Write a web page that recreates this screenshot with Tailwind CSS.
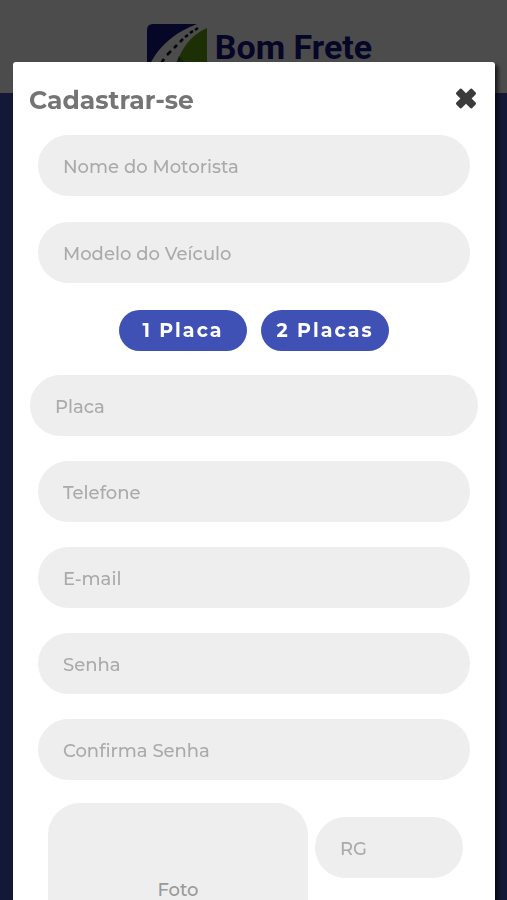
<!DOCTYPE html>
<html lang="pt-BR">
<head>
<meta charset="utf-8">
<meta name="viewport" content="width=device-width, initial-scale=1">
<title>Bom Frete</title>
<script src="https://cdn.jsdelivr.net/npm/@tailwindcss/browser@4"></script>
</head>
<body class="min-h-screen bg-[#3f51b5] font-['Montserrat','Inter',sans-serif]">
<header class="flex h-[93px] justify-center bg-white pt-6">
  <a href="#" class="flex gap-2 pl-3">
    <svg class="h-[60px] w-[60px]" viewBox="0 0 60 60" aria-hidden="true">
      <path d="M6 0H60V60H0V6Q0 0 6 0Z" fill="#14147f"/>
      <path d="M0 47C8 26 24 10 50 0H60V60H0Z" fill="#fff"/>
      <path d="M60 4V60H26C28 32 40 13 60 4Z" fill="#5f9e12"/>
      <path d="M32 32L38 40H29Z" fill="#3a6a30"/>
      <path d="M13 41L17 35M20 31L24 27M27 24L30 21M33 18L36 15M38 13L41 11M43 9L46 7M48 6L51 4" fill="none" stroke="#111" stroke-width="2.6"/>
    </svg>
    <span class="font-[Roboto,sans-serif] text-[34px] leading-[46px] font-bold text-[#14147f]">Bom Frete</span>
  </a>
</header>

<div class="fixed inset-0 overflow-y-auto bg-black/70 pt-[62px] pr-3 pl-[13px] [scrollbar-width:none]">
  <section role="dialog" aria-modal="true" aria-labelledby="titulo" class="rounded-[3px] bg-white px-4 pb-8 shadow-[3px_3px_4px_#000000b3]">
    <div class="flex h-[73px] items-center justify-between">
      <h1 id="titulo" class="pt-1 text-[25px] font-bold text-[#757575]">Cadastrar-se</h1>
      <button type="button" aria-label="Fechar" class="mr-0.5">
        <svg class="h-[22px] w-[22px]" viewBox="0 0 22 22" aria-hidden="true"><path d="M5 .8Q6 .3 7 1.200L11 5.200L15 1.200Q16 .3 17 .8L20.700 4.500Q21.500 5.500 20.600 6.500L16.600 10.500L20.600 14.500Q21.500 15.500 20.700 16.500L17 20.200Q16 20.700 15 19.800L11 15.800L7 19.800Q6 20.700 5 20.200L1.300 16.500Q.5 15.500 1.400 14.500L5.400 10.500L1.400 6.500Q.5 5.500 1.300 4.500Z" fill="#3b3b3b"/></svg>
      </button>
    </div>
    <form class="px-px">
      <div class="flex flex-col gap-[26px] px-2">
        <input type="text" aria-label="Nome do Motorista" placeholder="Nome do Motorista" class="h-[61px] w-full rounded-full bg-[#eeeeee] px-[25px] pt-0.5 text-lg font-medium text-gray-700 placeholder:text-[#aaaaaa]">
        <input type="text" aria-label="Modelo do Veículo" placeholder="Modelo do Veículo" class="h-[61px] w-full rounded-full bg-[#eeeeee] px-[25px] pt-0.5 text-lg font-medium text-gray-700 placeholder:text-[#aaaaaa]">
      </div>
      <div class="flex justify-center gap-[14px] pt-[27px] pb-6">
        <button type="button" class="h-[41px] w-32 rounded-full bg-[#3f51b5] pt-0.5 text-[19px] font-bold tracking-[2px] text-white">1 Placa</button>
        <button type="button" class="h-[41px] w-32 rounded-full bg-[#3f51b5] pt-0.5 text-[19px] font-bold tracking-[2px] text-white">2 Placas</button>
      </div>
      <input type="text" aria-label="Placa" placeholder="Placa" class="block h-[61px] w-full rounded-full bg-[#eeeeee] px-[25px] pt-0.5 text-lg font-medium text-gray-700 placeholder:text-[#aaaaaa]">
      <div class="flex flex-col gap-[25px] px-2 pt-[25px]">
        <input type="tel" aria-label="Telefone" placeholder="Telefone" class="h-[61px] w-full rounded-full bg-[#eeeeee] px-[25px] pt-0.5 text-lg font-medium text-gray-700 placeholder:text-[#aaaaaa]">
        <input type="email" aria-label="E-mail" placeholder="E-mail" class="h-[61px] w-full rounded-full bg-[#eeeeee] px-[25px] pt-0.5 text-lg font-medium text-gray-700 placeholder:text-[#aaaaaa]">
        <input type="password" aria-label="Senha" placeholder="Senha" class="h-[61px] w-full rounded-full bg-[#eeeeee] px-[25px] pt-0.5 text-lg font-medium text-gray-700 placeholder:text-[#aaaaaa]">
        <input type="password" aria-label="Confirma Senha" placeholder="Confirma Senha" class="h-[61px] w-full rounded-full bg-[#eeeeee] px-[25px] pt-0.5 text-lg font-medium text-gray-700 placeholder:text-[#aaaaaa]">
      </div>
      <div class="flex gap-[7px] pt-[23px] pr-[15px] pl-[18px]">
        <button type="button" class="h-[174px] min-w-0 flex-[260] rounded-[32px] bg-[#eeeeee] text-lg font-medium text-[#999999]">Foto</button>
        <div class="min-w-0 flex-[148] pt-[14px]">
          <input type="text" aria-label="RG" placeholder="RG" class="h-[61px] w-full rounded-full bg-[#eeeeee] px-[25px] pt-0.5 text-lg font-medium text-gray-700 placeholder:text-[#aaaaaa]">
        </div>
      </div>
    </form>
  </section>
</div>
</body>
</html>
